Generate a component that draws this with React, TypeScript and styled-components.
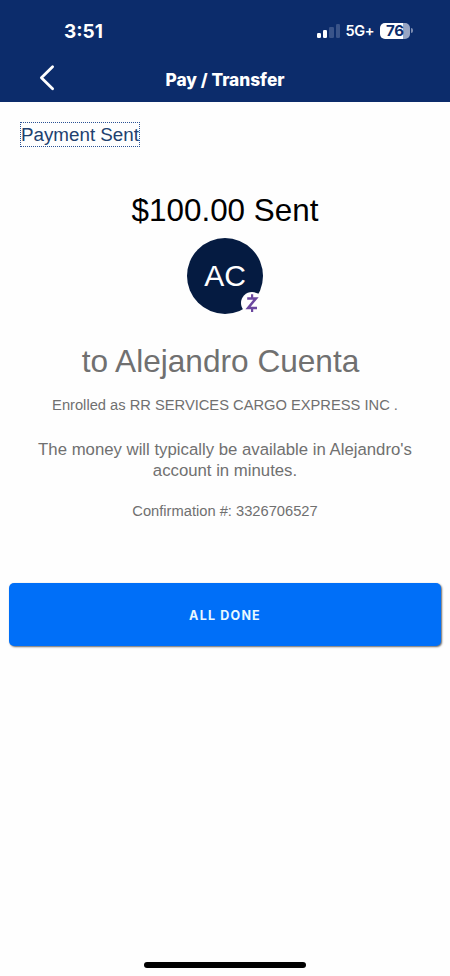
import styled, { createGlobalStyle } from "styled-components";

type TextLineProps = {
  size: number;
  line: number;
  top: number;
  color?: string;
  trailing?: number;
}

type SignalBarProps = {
  height: number;
  active: boolean;
}

const signalBars: SignalBarProps[] = [
  { height: 5, active: true },
  { height: 8, active: true },
  { height: 11, active: false },
  { height: 14, active: false },
];

export default function App()
{
  return (
    <>
      <GlobalStyle />
      <Screen>
        <Header>
          <StatusBar>
            <Time>3:51</Time>
            <StatusIcons>
              <Signal>
                { signalBars.map(( bar ) => (
                  <SignalBar key={ bar.height } height={ bar.height } active={ bar.active } />
                )) }
              </Signal>
              <Network>5G+</Network>
              <Battery>
                <BatteryBody>76</BatteryBody>
                <BatteryTip />
              </Battery>
            </StatusIcons>
          </StatusBar>
          <NavBar>
            <BackButton aria-label="Back">
              <svg width="16" height="28" viewBox="0 0 16 28" fill="none">
                <path d="M13.6 2.7 L2.4 13.8 L13.6 24.8" stroke="#fff" strokeWidth="2.8" strokeLinecap="round" strokeLinejoin="round" />
              </svg>
            </BackButton>
            <NavTitle>Pay / Transfer</NavTitle>
          </NavBar>
        </Header>
        <Content>
          <PageTitle>Payment Sent</PageTitle>
          <TextLine size={ 31.4 } line={ 36 } top={ 46 } color="#000">$100.00 Sent</TextLine>
          <Avatar>
            AC
            <Badge>
              <svg width="22" height="22" viewBox="0 0 22 22" fill="none" stroke="#6b479f">
                <path d="M11.1 2.2 V6 M11.1 16 V20" strokeWidth="2.2" />
                <path d="M6.2 6.4 H15 L7.1 15.9 H16" strokeWidth="2.5" />
              </svg>
            </Badge>
          </Avatar>
          <TextLine size={ 31.6 } line={ 36 } top={ 29 } trailing={ 9 }>to Alejandro Cuenta</TextLine>
          <TextLine size={ 14.7 } line={ 20 } top={ 16 }>Enrolled as RR SERVICES CARGO EXPRESS INC .</TextLine>
          <TextLine size={ 16.75 } line={ 21 } top={ 24 }>
            The money will typically be available in Alejandro's<br />
            account in minutes.
          </TextLine>
          <TextLine size={ 14.7 } line={ 20 } top={ 20 }>Confirmation #: 3326706527</TextLine>
          <DoneButton>ALL DONE</DoneButton>
        </Content>
        <HomeIndicator />
      </Screen>
    </>
  )
}

const GlobalStyle = createGlobalStyle`
  * {
    box-sizing: border-box;
  }

  body {
    margin: 0;
    background: #fefefe;
  }
`;

const Screen = styled.div`
  display: flex;
  flex-direction: column;
  width: 450px;
  height: 976px;
  overflow: hidden;
  background: #fefefe;
  font-family: "Liberation Sans", Arial, sans-serif;
`;

const Header = styled.header`
  display: flex;
  flex-direction: column;
  height: 102px;
  background: #0c2c6b;
  color: #fff;
  font-family: Inter, sans-serif;
`;

const StatusBar = styled.div`
  display: flex;
  justify-content: space-between;
  align-items: center;
  height: 54px;
  padding: 7px 37px 0 64px;
`;

const Time = styled.span`
  margin-top: 2px;
  font-size: 19px;
  font-weight: 700;
`;

const StatusIcons = styled.div`
  display: flex;
  align-items: center;
`;

const Signal = styled.div`
  display: flex;
  align-items: flex-end;
  gap: 2.2px;
  height: 14px;
`;

const SignalBar = styled.span.withConfig({
  shouldForwardProp: ( prop ) => prop !== "active" && prop !== "height",
})<SignalBarProps>`
  width: 4.2px;
  height: ${ ( props ) => props.height }px;
  border-radius: 1.2px;
  background: ${ ( props ) => props.active ? "#fff" : "#3a5489" };
`;

const Network = styled.span`
  margin-left: 5.5px;
  font-size: 14.5px;
  font-weight: 600;
  letter-spacing: -0.4px;
`;

const Battery = styled.div`
  display: flex;
  align-items: center;
  gap: 1px;
  margin-left: 6px;
`;

const BatteryBody = styled.span`
  width: 30px;
  height: 16px;
  border-radius: 5px;
  background: linear-gradient(to right, #fff 76%, #98a5c3 76%);
  color: #0c2c6b;
  font-size: 15px;
  font-weight: 700;
  line-height: 16px;
  text-align: center;
`;

const BatteryTip = styled.span`
  width: 2px;
  height: 5px;
  border-radius: 0 2px 2px 0;
  background: #7d8db2;
`;

const NavBar = styled.nav`
  display: grid;
  grid-template-columns: 60px 1fr 60px;
  align-items: center;
  height: 48px;
`;

const BackButton = styled.button`
  display: flex;
  justify-self: end;
  margin-right: 5px;
  padding: 0;
  border: 0;
  background: none;
`;

const NavTitle = styled.h1`
  margin: 3px 0 0;
  font-size: 17.3px;
  font-weight: 800;
  text-align: center;
`;

const Content = styled.main`
  display: flex;
  flex-direction: column;
  align-items: center;
  padding: 20px 9px 0;
`;

const PageTitle = styled.h2`
  align-self: flex-start;
  height: 25px;
  margin: 0 0 0 11px;
  border: 1px dotted #2a5295;
  color: #21406f;
  font-size: 18.8px;
  font-weight: 400;
  line-height: 24px;
  white-space: nowrap;
`;

const TextLine = styled.p.withConfig({
  shouldForwardProp: ( prop ) => ![ "size", "line", "top", "color", "trailing" ].includes( prop ),
})<TextLineProps>`
  margin: ${ ( props ) => props.top }px 0 0;
  padding-right: ${ ( props ) => props.trailing ?? 0 }px;
  color: ${ ( props ) => props.color ?? "#707070" };
  font-size: ${ ( props ) => props.size }px;
  line-height: ${ ( props ) => props.line }px;
  text-align: center;
  white-space: nowrap;
`;

const Avatar = styled.div`
  position: relative;
  display: flex;
  justify-content: center;
  align-items: center;
  width: 76px;
  height: 76px;
  margin-top: 9px;
  border-radius: 50%;
  background: #051b41;
  color: #fff;
  font-size: 30px;
`;

const Badge = styled.span`
  position: absolute;
  right: 0;
  bottom: 0;
  display: flex;
  width: 22px;
  height: 22px;
  border-radius: 50%;
  background: #fefefe;
`;

const DoneButton = styled.button`
  width: 432px;
  height: 63px;
  margin-top: 62px;
  padding: 2px 0 0;
  border: 0;
  border-radius: 5px;
  background: #006ff8;
  box-shadow: 1px 1px 2px #00000099;
  color: #e9f8ff;
  font-family: Inter, sans-serif;
  font-size: 12.5px;
  font-weight: 700;
  letter-spacing: 1.2px;
`;

const HomeIndicator = styled.div`
  width: 162px;
  height: 6px;
  margin: auto auto 8px;
  border-radius: 3px;
  background: #000;
`;
